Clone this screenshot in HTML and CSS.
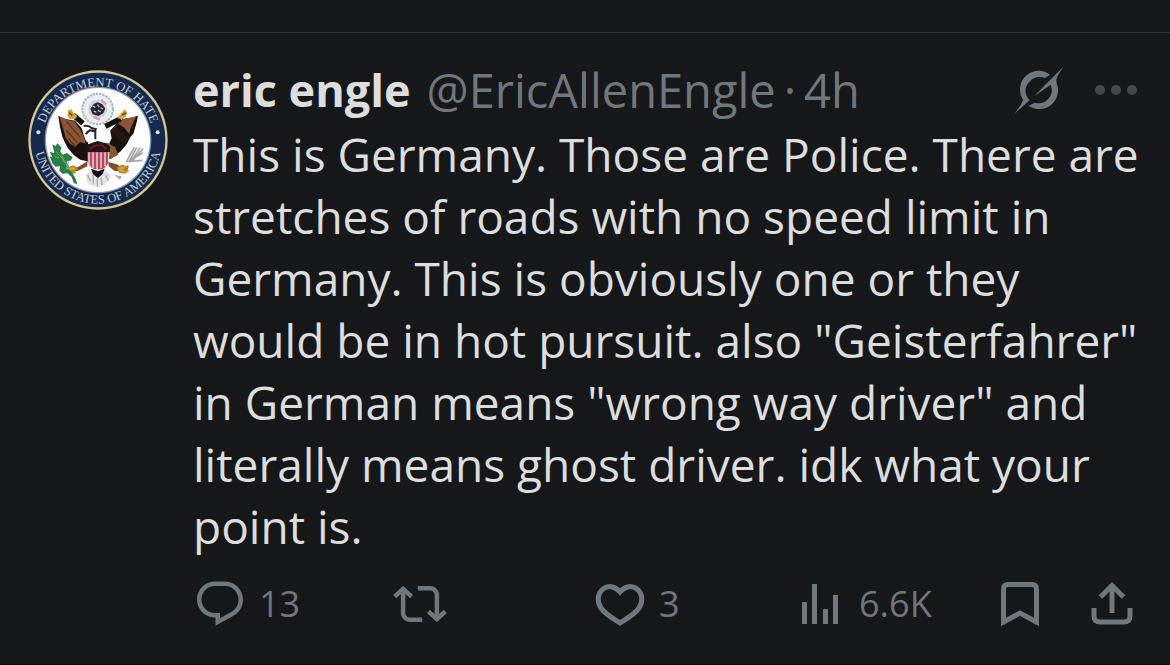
FILE: index.html
```html
<!DOCTYPE html>
<html lang="en">
<head>
<meta charset="UTF-8">
<meta name="viewport" content="width=device-width, initial-scale=1.0">
<title>eric engle on X</title>

<link rel="stylesheet" href="styles.css">

</head>

<body>

<article class="post">

    <!-- AVATAR -->

    <a class="avatar" href="#" aria-label="eric engle profile">
        <svg viewBox="30 30 420 420">
            <defs>
                <path id="ringTop" d="M71 248A169 169 0 0 1 409 248"/>
                <path id="ringBottom" d="M49 240A191 191 0 0 0 431 240"/>
            </defs>
            <circle cx="240" cy="240" r="209" fill="#d3c994"/>
            <circle cx="240" cy="240" r="202" fill="#14294d"/>
            <circle cx="240" cy="240" r="160" fill="#8c98a8"/>
            <circle cx="240" cy="240" r="156" fill="#fdfdfd"/>
            <text class="seal-text"><textPath href="#ringTop" startOffset="50%">DEPARTMENT OF HATE</textPath></text>
            <text class="seal-text"><textPath href="#ringBottom" startOffset="50%">UNITED STATES OF AMERICA</textPath></text>
            <circle cx="61" cy="217" r="6" fill="#dfe4ea"/>
            <circle cx="419" cy="217" r="6" fill="#dfe4ea"/>

            <!-- glory -->
            <circle cx="239" cy="147" r="46" fill="#e8ecef" stroke="#aab4b8" stroke-width="6" stroke-dasharray="7 3"/>
            <circle cx="239" cy="147" r="32" fill="#c9d9e4" stroke="#f4f4f4" stroke-width="5"/>
            <path d="M217 146l10-14 12-5 14 6 9 13-6 14-15 8-17-5z" fill="#2a2430"/>
            <path d="M224 138l8 4m6-8l6 7m4 2l7 4m-28 6l8 4m5-6l8 5" stroke="#c7bfc9" stroke-width="4"/>
            <path d="M250 119l14 14m-38 38l20 8" stroke="#e59aa5" stroke-width="7"/>

            <!-- wings -->
            <path d="M121 168l22 9 28 5 15 17 15 20 10 34 28-10 26 8 9-32 20-28 20-14 28-4 18-6-5 24-9 30-9 10-10 20-18 22-28 22-24 8-42 2-28-6-20-14-17-20-9-17-8-18-7-30z" fill="#17110f"/>
            <path d="M124 170l24 9 22 6 17 24 12 25 4 17-17-5-14 14-15-8-14-19-8-28z" fill="#8b5434"/>
            <path d="M299 190l18 12 17 20 4-17 17-36-38 8zM266 236l13 20 12 4 10 24-22 12-13-24z" fill="#8b5434"/>
            <path d="M145 184l42 48m-43-22l34 38m-27-13l22 25" stroke="#5c3420" stroke-width="4"/>
            <path d="M283 205l42 40" stroke="#231713" stroke-width="22"/>

            <!-- head and shoulders -->
            <path d="M190 198l28 5 10 18 4 12-14 15-14-4-8-22zM265 204l11 7 5 23-7 16-14-3-2-26z" fill="#fff"/>
            <path d="M197 198q16-3 25 7l11 2-3 7-15-3q-8 5-12 12m29-17v32" fill="none" stroke="#20242a" stroke-width="6"/>
            <path d="M165 165l30 25m113-14l-46 23" stroke="#15130f" stroke-width="16"/>
            <path d="M150 151l10-3 7 11 10 8-3 9-18 2-7-9zM319 148l9 9-4 12-13 10-13-5 9-11z" fill="#d5a438"/>
            <path d="M153 158l10 9m149-2l12-6" stroke="#66480c" stroke-width="5"/>

            <!-- shield -->
            <path d="M208 274q32-20 67 0l-3 35-13 15-18 10-20-11-12-15z" fill="#b7495f"/>
            <path d="M213 277v37m12-37v47m12-47v54m12-54v48m12-48v42m11-42v29" stroke="#f2dfe2" stroke-width="4"/>
            <path d="M207 276v-18l17-10h37l15 11v17z" fill="#271316"/>
            <path d="M216 266l16-10h21l13 12" fill="none" stroke="#6e1b29" stroke-width="5"/>

            <!-- tail -->
            <path d="M203 346l23-18h32l22 18-8 15-12 12-14 8-21-3-17-9z" fill="#e4e4e4"/>
            <path d="M219 326l21 8 20-8-6 16-14 12-15-11z" fill="#111"/>
            <path d="M209 344l8 19m8-17l1 27m12-18v25m12-27l2 22m11-29l9 17" stroke="#aaa" stroke-width="4"/>

            <!-- legs -->
            <path d="M208 304l-29 18-22-1-8 9 12 5 18-2 29-14zM272 307l25 6 16 10 18-7-1 12-16 7-25-3-17-13z" fill="#7e4d2a"/>
            <path d="M151 323l17-5 9 10-15 4 9 6-12 2m139-16l15-8 16 6-12 7 13 4-10 6-18-3" fill="#d0a13a" stroke="#b48724" stroke-width="4"/>

            <!-- olive branch and arrows -->
            <path d="M118 250l12 12-3 14 8 8 12-5 17 13-5 9-14 4 8 14-5 7 12 8 12 20 6 18-10-2-8-20-12-10-15 1-9-9 2-13-13 1-9-9-9-22 8 3-8-17 14 5-3-15-3-12 10 5z" fill="#2c7c45"/>
            <path d="M114 274l25 28 14 26m-30-34l-13-4m29 18l-7-22m12 42l8-21" fill="none" stroke="#6bb06f" stroke-width="3"/>
            <path d="M325 306l24-44m-15 43l22-43m-17 43l27-42m-23 39l32-36m-37 34l37-22m-46 27l44-4" stroke="#a6a6a6" stroke-width="5"/>
            <path d="M289 345l22 4-5 11z" fill="#aaa"/>
        </svg>
    </a>

    <div class="content">

        <!-- HEADER -->

        <header class="head">
            <a class="name" href="#">eric engle</a>
            <a class="handle" href="#">@EricAllenEngle</a>
            <span class="dot">·</span>
            <time class="time">4h</time>

            <button class="grok" type="button" aria-label="Explain this post">
                <svg viewBox="36 24 162 162">
                    <path d="M150 59A56 56 0 0 0 69 134C66 146 55 160 44 176L89 136C73 121 73 98 85 84C98 66 120 62 135 69Z"/>
                    <path d="M86 152A56 56 0 0 0 170 85C166 68 178 55 190 35L102 124L152 89A40 40 0 0 1 104 143Z"/>
                </svg>
            </button>

            <button class="more" type="button" aria-label="More">
                <svg viewBox="0 0 46 54">
                    <circle cx="7" cy="27" r="5"/>
                    <circle cx="23" cy="27" r="5"/>
                    <circle cx="39" cy="27" r="5"/>
                </svg>
            </button>
        </header>

        <p class="text">This is Germany. Those are Police. There are<br>
        stretches of roads with no speed limit in<br>
        Germany. This is obviously one or they<br>
        would be in hot pursuit. also "Geisterfahrer"<br>
        in German means "wrong way driver" and<br>
        literally means ghost driver. idk what your<br>
        point is.</p>

        <!-- ACTIONS -->

        <div class="actions">

            <button class="action" type="button" aria-label="13 replies">
                <svg viewBox="0 0 24 24"><path d="M1.751 10c0-4.42 3.584-8 8.005-8h4.366c4.49 0 8.129 3.64 8.129 8.13 0 2.96-1.607 5.68-4.196 7.11l-8.054 4.46v-3.69h-.067c-4.49.1-8.183-3.51-8.183-8.01zm8.005-6c-3.317 0-6.005 2.69-6.005 6 0 3.37 2.77 6.08 6.138 6.01l.351-.01h1.761v2.3l5.087-2.81c1.951-1.08 3.163-3.13 3.163-5.36 0-3.39-2.744-6.13-6.129-6.13H9.756z"/></svg>
                <span>13</span>
            </button>

            <button class="action" type="button" aria-label="Repost">
                <svg viewBox="0 0 24 24"><path d="M4.5 3.88l4.432 4.14-1.364 1.46L5.5 7.55V16c0 1.1.896 2 2 2H13v2H7.5c-2.209 0-4-1.79-4-4V7.55L1.432 9.48.068 8.02 4.5 3.88zM16.5 6H11V4h5.5c2.209 0 4 1.79 4 4v8.45l2.068-1.93 1.364 1.46-4.432 4.14-4.432-4.14 1.364-1.46 2.068 1.93V8c0-1.1-.896-2-2-2z"/></svg>
            </button>

            <button class="action" type="button" aria-label="3 likes">
                <svg class="line" viewBox="0 0 54 54"><path d="M27 15C22 9 15 8 10 12C4 17 4 25 8 31C12 37 19 41 27 46C35 41 42 37 46 31C50 25 50 17 44 12C39 8 32 9 27 15Z"/></svg>
                <span>3</span>
            </button>

            <button class="action" type="button" aria-label="6.6K views">
                <svg viewBox="0 0 54 54"><path d="M9 25h5v22H9zM19 7h5v40h-5zM30 32h5v15h-5zM40 18h5v29h-5z"/></svg>
                <span>6.6K</span>
            </button>

            <button class="action small" type="button" aria-label="Bookmark">
                <svg class="line" viewBox="0 0 54 54"><path d="M10.5 45V12Q10.5 7.5 15 7.5H39Q43.5 7.5 43.5 12V45L27 36Z"/></svg>
            </button>

            <button class="action small" type="button" aria-label="Share">
                <svg class="line" viewBox="0 0 54 54"><path d="M27 36V9M15.5 20L27 8.5L38.5 20M9 31V39Q9 45 15 45H39Q45 45 45 39V31"/></svg>
            </button>

        </div>

    </div>

</article>

</body>
</html>
```
FILE: styles.css
```css
*{
    margin:0;
    padding:0;
    box-sizing:border-box;
}

body{
    min-height:100vh;
    padding-top:32px;
    background:#161719;
    color:#dcdddd;
    font-family:"Open Sans","Noto Sans",sans-serif;
}

a{
    color:inherit;
    text-decoration:none;
}

button{
    border:none;
    background:none;
    color:inherit;
    font:inherit;
    cursor:pointer;
}

svg{
    display:block;
    fill:currentColor;
}

/* POST */

.post{
    display:flex;
    gap:25px;

    min-height:calc(100vh - 32px);
    padding:26px 31px 0 28px;

    border-top:1px solid #303235;
    border-bottom:1px solid #0c0a0e;
}

.avatar{
    flex:none;
    width:140px;
    padding-top:11px;
}

.seal-text{
    fill:#c6ced8;
    font-family:"Liberation Serif",serif;
    font-size:38px;
    text-anchor:middle;
}

.content{
    flex:1;
    min-width:0;
}

/* HEADER */

.head{
    display:flex;
    align-items:center;

    height:62px;

    color:#71767b;
    font-size:47px;
    line-height:62px;
    white-space:nowrap;
}

.name{
    margin-right:16px;
    color:#dcdddd;
    font-size:45px;
    font-weight:700;
}

.dot{
    margin:0 8px;
}

.grok{
    width:54px;
    margin-left:auto;
}

.more{
    width:46px;
    margin-left:27px;
    color:#45484c;
}

/* TEXT */

.text{
    margin-top:2px;
    font-size:46px;
    line-height:62px;
    white-space:nowrap;
}

/* ACTIONS */

.actions{
    display:flex;
    align-items:center;

    margin-top:20px;

    color:#71767b;
}

.action{
    display:flex;
    flex:1;
    align-items:center;
    gap:12px;

    font-size:36px;
    line-height:54px;
}

.action svg{
    flex:none;
    width:54px;
    height:54px;
}

.action.small{
    flex:none;
}

.action.small + .small{
    margin-left:38px;
}

.line{
    fill:none;
    stroke:currentColor;
    stroke-width:5;
}
```
